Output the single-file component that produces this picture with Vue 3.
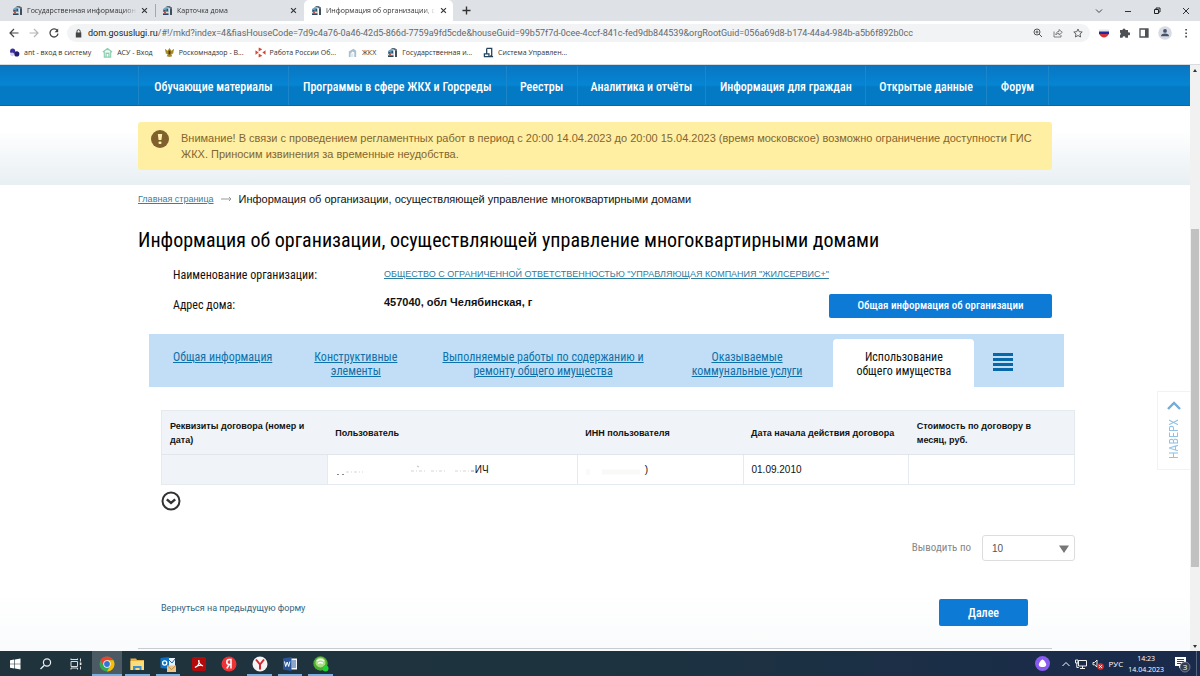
<script setup>
import { ref } from 'vue'

const tabs = [
  { title: 'Государственная информацион', active: false },
  { title: 'Карточка дома', active: false },
  { title: 'Информация об организации, с', active: true }
]
const url = ref('dom.gosuslugi.ru/#!/mkd?index=4&fiasHouseCode=7d9c4a76-0a46-42d5-866d-7759a9fd5cde&houseGuid=99b57f7d-0cee-4ccf-841c-fed9db844539&orgRootGuid=056a69d8-b174-44a4-984b-a5b6f892b0cc')
const host = 'dom.gosuslugi.ru'
const menu = ['Обучающие материалы', 'Программы в сфере ЖКХ и Горсреды', 'Реестры', 'Аналитика и отчёты', 'Информация для граждан', 'Открытые данные', 'Форум']
const perPage = ref('10')
</script>

<template>
  <div class="window">
    <svg class="defs" aria-hidden="true">
      <symbol id="city" viewBox="0 0 22 22">
        <path d="M9 2h6l5 3v15h-4V7l-3-2H9z" fill="#5d6d79" />
        <path d="M17 8h2v12h-2z" fill="#24323c" />
        <path d="M2 8l6-4 5 3v12H2z" fill="#6b9fbd" />
        <path d="M3 10h4v3H3zm6-2h3v4H9z" fill="#2d536c" />
        <path d="M1 14h13v3H1z" fill="#ddd" />
        <path d="M2 17h11v3H2z" fill="#2b465b" />
        <path d="M4 14h4v3H4z" fill="#c0504a" />
      </symbol>
      <symbol id="cross" viewBox="0 0 10 10">
        <path d="M1.500 1.500l7 7m0-7l-7 7" stroke="#333" stroke-width="1.600" fill="none" />
      </symbol>
    </svg>

    <header class="chrome">
      <div class="tabstrip">
        <div v-for="t in tabs" :key="t.title" class="tab" :class="{ active: t.active }">
          <svg class="fav"><use href="#city" /></svg>
          <span class="tab-title">{{ t.title }}</span>
          <button class="plain" aria-label="Закрыть вкладку"><svg class="x"><use href="#cross" /></svg></button>
        </div>
        <button class="plain new-tab" aria-label="Новая вкладка">
          <svg width="9" height="9" viewBox="0 0 9 9"><path d="M4.500 0.500v8M0.500 4.500h8" stroke="#333" stroke-width="1.400" /></svg>
        </button>
        <div class="win-controls">
          <button class="plain" aria-label="Поиск вкладок"><svg width="8" height="8" viewBox="0 0 8 8"><path d="M1 2.500l3 3 3-3" fill="none" stroke="#444" /></svg></button>
          <button class="plain" aria-label="Свернуть"><svg width="8" height="8" viewBox="0 0 8 8"><path d="M1 4.500h6" stroke="#333" /></svg></button>
          <button class="plain" aria-label="Восстановить"><svg width="8" height="8" viewBox="0 0 8 8"><path d="M1.500 2.500h4v4h-4zM3 2.500V1h4v4H5.500" fill="none" stroke="#222" /></svg></button>
          <button class="plain" aria-label="Закрыть"><svg width="8" height="8" viewBox="0 0 8 8"><path d="M1 1l6 6m0-6L1 7" stroke="#333" /></svg></button>
        </div>
      </div>

      <div class="toolbar">
        <div class="nav-buttons">
          <button class="plain" aria-label="Назад"><svg width="10" height="10" viewBox="0 0 10 10"><path d="M9.500 5H1m4-4L1 5l4 4" fill="none" stroke="#444" stroke-width="1.200" /></svg></button>
          <button class="plain" aria-label="Вперёд"><svg width="10" height="10" viewBox="0 0 10 10"><path d="M0.500 5H9M5 1l4 4-4 4" fill="none" stroke="#b4b6b9" stroke-width="1.200" /></svg></button>
          <button class="plain" aria-label="Обновить"><svg width="10" height="10" viewBox="0 0 10 10"><path d="M8.300 2.600A4 4 0 1 0 9 5.700" fill="none" stroke="#444" stroke-width="1.300" /><path d="M9.200 0.500v3.700H5.500z" fill="#444" /></svg></button>
        </div>
        <div class="omnibox">
          <svg width="7" height="9" viewBox="0 0 7 9"><path d="M0.800 3.500h5.500v5H0.800z" fill="#444" /><path d="M2 4V2.300a1.600 1.600 0 0 1 3.200 0V4" fill="none" stroke="#444" /></svg>
          <div class="address"><span class="host">{{ host }}</span>{{ url.slice(host.length) }}</div>
          <div class="omni-icons">
            <svg viewBox="0 0 10 10"><circle cx="4" cy="4" r="3" fill="none" stroke="#555" /><path d="M6.200 6.200L9 9M2.500 4h3M4 2.500v3" stroke="#555" /></svg>
            <svg viewBox="0 0 10 10"><path d="M1 3.500V9h7V7M2.800 7C3 4.500 4.500 3.400 6 3.400V1.500l3.300 2.800L6 7V5.300C4.500 5.300 3.500 6 2.800 7z" fill="none" stroke="#666" stroke-width="0.800" /></svg>
            <svg viewBox="0 0 10 10"><path d="M5 1l1.200 2.700 3 .3L7 6l.6 3L5 7.500 2.400 9 3 6 .8 4l3-.3z" fill="none" stroke="#555" stroke-width="0.900" /></svg>
          </div>
        </div>
        <div class="extensions">
          <svg viewBox="0 0 12 12"><path d="M1 2.500h10V5H1z" fill="#e3e5ea" /><path d="M1 4.500h10v2.600H1z" fill="#1d2ba0" /><path d="M1.200 7.100h9.600Q9 10.500 6 10.500T1.200 7.100z" fill="#cf3338" /></svg>
          <svg viewBox="0 0 12 12"><path d="M2 3h2.500a1.500 1.500 0 1 1 3 0H10v2.500a1.500 1.500 0 1 1 0 2.500v2.700H7.400a1.400 1.400 0 0 0-2.800 0H2V8a1.400 1.400 0 0 0 0-2.500z" fill="#4d5156" /></svg>
          <svg viewBox="0 0 12 12"><path d="M2 2h8v8H2z" fill="none" stroke="#4d5156" stroke-width="1.300" /><path d="M7 2h3v8H7z" fill="#4d5156" /></svg>
          <svg class="avatar" viewBox="0 0 14 14"><circle cx="7" cy="7" r="6.800" fill="#d8dbe4" /><circle cx="7" cy="4.900" r="1.900" fill="#46536b" /><path d="M3 10.300q0-2.800 4-2.800t4 2.800z" fill="#46536b" /></svg>
          <svg viewBox="0 0 12 12"><path d="M5.300 2h1.600v1.600H5.300zm0 3.400h1.600V7H5.300zm0 3.400h1.600v1.600H5.300z" fill="#444" /></svg>
        </div>
      </div>

      <nav class="bookmarks">
        <a href="#"><svg viewBox="0 0 12 12"><circle cx="4" cy="4.500" r="2.800" fill="#3a2f9b" /><circle cx="8.500" cy="7.500" r="2.800" fill="#241b75" /><circle cx="3.500" cy="8" r="2" fill="#cfcdf0" /></svg>ant - вход в систему</a>
        <a href="#"><svg viewBox="0 0 12 12"><path d="M1 5.500L6 1.500l5 4M2.500 5v6h7V5M4.500 11V7h3v4" fill="#dff5ea" stroke="#8bcdb0" stroke-width="1.200" /></svg>АСУ - Вход</a>
        <a href="#"><svg viewBox="0 0 12 12"><path d="M1 2l3 2 2-3 2 3 3-2-1 5-2 1 1 2-3 1-3-1 1-2-2-1z" fill="#a98a2b" /><path d="M5 4h2v4H5z" fill="#44381a" /></svg>Роскомнадзор - В...</a>
        <a href="#"><svg viewBox="0 0 12 12"><path d="M4 0.500l4 2-4 2.500zM0.500 3.500l3.500 2.500-3.500 2.500zM11.500 3.500v5L8 6zM4 7l4 2.500-4 2z" fill="#d14b38" /></svg>Работа России Об...</a>
        <a href="#"><svg viewBox="0 0 12 12"><path d="M2 5l5-3 3 2v7H8V6L6 5 4 7v4H2z" fill="#a7bfce" /><path d="M4 7h3v4H4z" fill="#dde9ef" /></svg>ЖКХ</a>
        <a href="#"><svg><use href="#city" /></svg>Государственная и...</a>
        <a href="#"><svg viewBox="0 0 12 12"><path d="M4 1.500h5.500v8H8M4 1.500V8M1 10.500h10M1.500 10.500V7.500h5v3" fill="none" stroke="#23435f" stroke-width="1.400" /></svg>Система Управлен...</a>
      </nav>
    </header>

    <div class="viewport">
      <main class="site">
        <nav class="menu">
          <div class="menu-inner wrap">
            <a v-for="m in menu" :key="m" href="#">{{ m }}</a>
          </div>
        </nav>

        <div class="notice-zone">
          <div class="notice wrap" role="alert">
            <svg width="18" height="18" viewBox="0 0 18 18"><circle cx="9" cy="9" r="9" fill="#80602c" /><path d="M6.800 4h4.400l-.8 6H7.600z" fill="#fff0ab" /><rect x="7.500" y="11.500" width="3" height="2.500" rx="1" fill="#fff0ab" /></svg>
            <p>Внимание! В связи с проведением регламентных работ в период с 20:00 14.04.2023 до 20:00 15.04.2023 (время московское) возможно ограничение доступности ГИС ЖКХ. Приносим извинения за временные неудобства.</p>
          </div>
        </div>

        <div class="content wrap">
          <div class="crumbs">
            <a href="#">Главная страница</a>
            <svg width="11" height="6" viewBox="0 0 11 6"><path d="M0 3h10M8 1l2 2-2 2" fill="none" stroke="#999" /></svg>
            <span>Информация об организации, осуществляющей управление многоквартирными домами</span>
          </div>

          <h1>Информация об организации, осуществляющей управление многоквартирными домами</h1>

          <dl class="facts">
            <dt>Наименование организации:</dt>
            <dd><a href="#">ОБЩЕСТВО С ОГРАНИЧЕННОЙ ОТВЕТСТВЕННОСТЬЮ "УПРАВЛЯЮЩАЯ КОМПАНИЯ "ЖИЛСЕРВИС+"</a></dd>
            <dt>Адрес дома:</dt>
            <dd class="addr"><b>457040, обл Челябинская, г</b><button class="primary small">Общая информация об организации</button></dd>
          </dl>

          <nav class="sections">
            <a href="#">Общая информация</a>
            <a href="#">Конструктивные<br>элементы</a>
            <a href="#" class="roomy">Выполняемые работы по содержанию и<br>ремонту общего имущества</a>
            <a href="#" class="roomy">Оказываемые<br>коммунальные услуги</a>
            <a href="#" class="current">Использование<br>общего имущества</a>
            <button class="plain list" aria-label="Все разделы"><svg width="20" height="18" viewBox="0 0 20 18"><path d="M0 1.500h20M0 6.500h20M0 11.500h20M0 16.500h20" stroke="#0668a9" stroke-width="3" /></svg></button>
          </nav>

          <section class="data">
            <table>
              <thead>
                <tr>
                  <th>Реквизиты договора (номер и дата)</th>
                  <th class="wide">Пользователь</th>
                  <th>ИНН пользователя</th>
                  <th>Дата начала действия договора</th>
                  <th class="cost">Стоимость по договору в месяц, руб.</th>
                </tr>
              </thead>
              <tbody>
                <tr>
                  <td class="shade"></td>
                  <td><svg class="smudge" width="139" height="12" viewBox="0 0 139 12"><path d="M1 10.500h2m3 0h2" stroke="#888" /><path d="M10 8h17M75 7h14m6 0h16m8 0h20" stroke="#999" stroke-width="2" stroke-dasharray="3 2 1 2" opacity=".2" /><path d="M81 2l2 1m52 4h3" stroke="#777" opacity=".5" /></svg>ИЧ</td>
                  <td><svg class="smudge" width="59" height="12" viewBox="0 0 59 12"><path d="M0 8h4m12 0h38" stroke="#bba" stroke-width="5" opacity=".08" /></svg>)</td>
                  <td>01.09.2010</td>
                  <td></td>
                </tr>
              </tbody>
            </table>
            <button class="plain expand" aria-label="Развернуть"><svg width="20" height="20" viewBox="0 0 20 20"><circle cx="10" cy="10" r="8.500" fill="none" stroke="#333" stroke-width="2" /><path d="M5.800 8.300L10 12l4.200-3.700" fill="none" stroke="#333" stroke-width="2.400" /></svg></button>

            <div class="pager">
              <label for="per-page">Выводить по</label>
              <div class="select">
                <select id="per-page" v-model="perPage"><option>10</option><option>20</option><option>50</option></select>
                <svg width="10" height="8" viewBox="0 0 10 8"><path d="M0 0.500h10L5 8z" fill="#777" /></svg>
              </div>
            </div>

            <div class="actions">
              <a href="#">Вернуться на предыдущую форму</a>
              <button class="primary next">Далее</button>
            </div>
          </section>
          <hr>
        </div>

        <button class="to-top">
          <svg width="14" height="9" viewBox="0 0 14 9"><path d="M1 8l6-6 6 6" fill="none" stroke="#74acd8" stroke-width="2.400" /></svg>
          <span>НАВЕРХ</span>
        </button>
      </main>

      <aside class="scrollbar">
        <svg width="6" height="10" viewBox="0 0 6 10"><path d="M1 7l2-3 2 3z" fill="#333" /></svg>
        <i class="before"></i><i class="thumb"></i><i class="after"></i>
        <svg width="6" height="10" viewBox="0 0 6 10"><path d="M1 4l2 3 2-3z" fill="#333" /></svg>
      </aside>
    </div>

    <footer class="taskbar">
      <div class="apps">
        <button class="plain" aria-label="Пуск"><svg viewBox="0 0 16 16"><path d="M3 4.200l4.400-.7v4.200H3zM8 3.400l5.500-.8v5.100H8zM3 8.300h4.400v4.200L3 11.800zM8 8.300h5.500v5.100L8 12.600z" fill="#fff" /></svg></button>
        <button class="plain" aria-label="Поиск"><svg viewBox="0 0 16 16"><circle cx="9" cy="6.500" r="3.600" fill="none" stroke="#eee" stroke-width="1.200" /><path d="M6.400 9.200L2.500 13" stroke="#eee" stroke-width="1.300" /></svg></button>
        <button class="plain" aria-label="Представление задач"><svg viewBox="0 0 16 16"><path d="M3 5.500h6.500v5H3zM3 4V2.500M9.500 4V2.500M3 3.500h6.500M3 13.500V12h6.500v1.500M12.500 2.500v3m0 5v3" fill="none" stroke="#ddd" /><path d="M11.800 6.500h1.600v2.500h-1.600z" fill="#eee" /></svg></button>
        <button class="plain run focus" aria-label="Chrome"><svg viewBox="0 0 16 16"><circle cx="8" cy="8" r="7.500" fill="#34a853" /><path d="M1.500 4.300A7.500 7.500 0 0 1 14.500 4.300H8L4.700 10z" fill="#ea4335" /><path d="M14.500 4.300A7.500 7.500 0 0 1 8 15.500L11.300 9.500 8 4.300z" fill="#fbbc05" /><circle cx="8" cy="8" r="3.700" fill="#fff" /><circle cx="8" cy="8" r="2.900" fill="#2f74e0" /></svg></button>
        <button class="plain run" aria-label="Проводник"><svg viewBox="0 0 16 16"><path d="M1.500 2.500H7l1 1.500h7v10H1.500z" fill="#e8b13c" /><path d="M1.500 5h13.500v9H1.500z" fill="#fbdc7c" /><path d="M4 14v-4h8.500v4h-2v-2h-4v2z" fill="#3f8ed0" /></svg></button>
        <button class="plain run" aria-label="Outlook"><svg viewBox="0 0 16 16"><path d="M8 2h7v8H8z" fill="#e9f2fa" /><path d="M9 4l3 3 3-4" stroke="#0b6cc0" fill="none" /><path d="M0.500 2L9 1v12l-8.500-1z" fill="#0872c6" /><circle cx="4.700" cy="7" r="2.100" fill="none" stroke="#fff" stroke-width="1.300" /><path d="M7 9.500h9V16H7z" fill="#efc587" /><path d="M7 9.500l4.500 4 4.500-4" fill="none" stroke="#b27d3c" stroke-width="0.800" /></svg></button>
        <button class="plain" aria-label="Acrobat"><svg viewBox="0 0 16 16"><rect x="1" y="1" width="14" height="14" rx="2" fill="#b30b0b" /><path d="M4 11.500C7 10 8.500 7 8 4.500 7.300 4 7 8 12 10 10 8.500 6 9.500 4 11.500z" fill="none" stroke="#fff" stroke-width="1.100" /></svg></button>
        <button class="plain" aria-label="Яндекс"><svg viewBox="0 0 16 16"><circle cx="8" cy="8" r="7.500" fill="#ee3337" /><path d="M10 12.500v-9H8.300a2.300 2.300 0 0 0 0 5H10M8.300 8.500L5.700 12.500" fill="none" stroke="#fff" stroke-width="1.500" /></svg></button>
        <button class="plain run" aria-label="Яндекс Браузер"><svg viewBox="0 0 16 16"><circle cx="8" cy="8" r="7.500" fill="#f4f4f4" /><path d="M4 3.500L8 8.500v5M12 3.500L8 8.500" fill="none" stroke="#d7262d" stroke-width="2" /></svg></button>
        <button class="plain run" aria-label="Word"><svg viewBox="0 0 16 16"><path d="M8 2.500h7v11H8z" fill="#f2f5fa" /><path d="M9.500 5H14M9.500 7H14M9.500 9H14M9.500 11H14" stroke="#2a5699" /><path d="M1 2.500L9.500 1v14L1 13.500z" fill="#2a5699" /><path d="M2.500 5.500l1.200 5 1.500-4.500 1.500 4.500 1.200-5" fill="none" stroke="#fff" /></svg></button>
        <button class="plain run" aria-label="Мессенджер"><svg viewBox="0 0 16 16"><circle cx="7.500" cy="7.500" r="7.200" fill="#4dab2e" /><circle cx="7.500" cy="6.500" r="5" fill="#a9de84" /><path d="M4 5q3.500-3 7 0M5 7.500q2.500-2 5 0" fill="none" stroke="#fff" stroke-width="1.300" /><circle cx="12.500" cy="12.500" r="3" fill="#22d132" /></svg></button>
      </div>
      <div class="tray">
        <svg class="alice" viewBox="0 0 16 16"><circle cx="8" cy="8" r="8" fill="#8a5bf0" /><path d="M8 3.800c1.600 0 4 4.200 4 5.600 0 1.800-1.800 2.400-4 2.400s-4-.6-4-2.400C4 8 6.400 3.800 8 3.800z" fill="#fff" /></svg>
        <svg width="8" height="8" viewBox="0 0 8 8"><path d="M0.500 6L4 2.500 7.500 6" fill="none" stroke="#fff" /></svg>
        <svg width="12" height="12" viewBox="0 0 12 12"><path d="M3.500 2.500h8v5.500h-8zM5 10.500h5M7.500 8v2.500M0.500 2h2.500v3H0.500zM1.800 5v4.500h2" fill="none" stroke="#eee" /></svg>
        <svg width="12" height="12" viewBox="0 0 12 12"><path d="M1 4.500h1.500L5 2v7L2.500 6.800H1z" fill="none" stroke="#eee" /><circle cx="8.500" cy="8.500" r="3.300" fill="#c9373c" /><path d="M7.200 7.200l2.600 2.600m0-2.600L7.200 9.800" stroke="#fff" /></svg>
        <span>РУС</span>
        <time>14:23<br>14.04.2023</time>
        <svg class="alerts" width="18" height="18" viewBox="0 0 18 18"><path d="M2 2h11v9H8l-2 2.500V11H2z" fill="#fff" /><path d="M4 4.500h7M4 6.500h7M4 8.500h4" stroke="#33405c" /><circle cx="12" cy="12" r="5" fill="#343e50" stroke="#8c96a6" stroke-width="0.700" /><text x="12" y="15" text-anchor="middle">3</text></svg>
      </div>
    </footer>
  </div>
</template>

<style>
body { margin: 0; background: #fff; }
</style>

<style scoped>
* { box-sizing: border-box; }
.window { min-height: 100vh; display: flex; flex-direction: column; font-family: "Liberation Sans", Arial, sans-serif; color: #111; }
.defs { position: absolute; width: 0; height: 0; }
a { color: inherit; text-decoration: none; }
svg { display: block; flex: none; }
button { font: inherit; cursor: pointer; }
.plain { border: 0; padding: 0; background: none; display: flex; align-items: center; justify-content: center; }

.chrome { font: 7px/12px "Open Sans", "Noto Sans", sans-serif; color: #333; border-bottom: 1px solid #d9dcdf; }
.tabstrip { height: 21px; background: #dee1e6; display: flex; align-items: center; }
.tab { width: 142px; height: 21px; padding: 0 1px 0 6px; display: flex; align-items: center; gap: 4px; }
.tab:first-child { width: 156px; height: 13px; padding: 0 7px 0 12px; border-right: 1px solid #a4a7ab; }
.tab.active { width: 149px; background: #fff; border-radius: 5px 5px 0 0; padding: 0 6px 0 7px; margin-left: 6px; }
.fav { width: 11px; height: 11px; }
.tab-title { flex: 1; white-space: nowrap; mask-image: linear-gradient(90deg, #000 88%, transparent); }
.x { width: 7px; height: 7px; }
.new-tab { width: 27px; height: 21px; }
.win-controls { margin-left: auto; display: flex; }
.win-controls button { width: 29px; height: 18px; }
.toolbar { display: flex; align-items: center; height: 24px; background: #fff; }
.nav-buttons { display: flex; gap: 10px; padding: 0 9px; width: 67px; }
.omnibox { flex: 1; min-width: 0; height: 18px; border-radius: 9px; background: #f1f3f4; display: flex; align-items: center; gap: 6px; padding: 0 7px 0 8px; }
.address { flex: 1; min-width: 0; font: 9px/16px Roboto, "Noto Sans", sans-serif; color: #64686c; white-space: nowrap; overflow: hidden; }
.host { color: #222; }
.omni-icons { display: flex; gap: 10px; }
.omni-icons svg { width: 10px; height: 10px; }
.extensions { display: flex; align-items: center; gap: 8px; padding: 0 8px; }
.extensions svg { width: 12px; height: 12px; }
.extensions .avatar { width: 14px; height: 14px; }
.bookmarks { height: 19px; display: flex; align-items: center; gap: 11px; padding: 0 9px 4px; }
.bookmarks a { display: flex; align-items: center; gap: 4px; white-space: nowrap; }
.bookmarks svg { width: 11px; height: 11px; }

.viewport { flex: 1; display: flex; }
.site { flex: 1; min-width: 0; position: relative; background: linear-gradient(#fff 90%, #f9fbfc); }
.wrap { max-width: 914px; margin-left: auto; margin-right: auto; }
.menu { background: linear-gradient(#0a76c2, #0585d3 48%, #047ac4 54%, #0479c4); border-top: 1px solid #1a6ea5; border-bottom: 1px solid #0b69a6; }
.menu-inner { display: grid; grid-template-columns: 150fr 218fr 71fr 129fr 160fr 121fr 62fr 3fr; border-left: 1px solid #1c86cb; }
.menu-inner a { color: #fff; text-align: center; font: 500 12px/36px "Roboto Condensed", "Liberation Sans Narrow", "Liberation Sans", sans-serif; padding-top: 3px; white-space: nowrap; border-right: 1px solid #1c86cb; }
.notice-zone { padding: 16px 0 15px; background: linear-gradient(#fff 30%, #e8eff3); }
.notice { background: #ffefa3; border-radius: 3px; padding: 8px 0 8px 13px; display: flex; align-items: flex-start; gap: 12px; color: #83652f; }
.notice p { margin: 0; font-size: 11px; line-height: 16px; }

.crumbs { display: flex; align-items: center; gap: 7px; padding-top: 6px; font-size: 11px; line-height: 16px; }
.crumbs a { font-size: 9px; color: #3b7ea1; text-decoration: underline; }
h1 { margin: 20px 0 0; font: 400 20px/26px "Roboto Condensed", "Liberation Sans Narrow", "Liberation Sans", sans-serif; color: #000; }
.facts { margin: 10px 0 0; padding-left: 35px; display: grid; grid-template-columns: 211px 1fr; row-gap: 6px; }
.facts dt { font: 12px/24px "Roboto Condensed", "Liberation Sans Narrow", "Liberation Sans", sans-serif; }
.facts dd { margin: 0; font-size: 9px; line-height: 22px; }
.facts dd a { color: #2e7d9e; text-decoration: underline; }
.facts .addr { display: flex; justify-content: space-between; align-items: flex-start; font-size: 11px; line-height: 18px; }
.primary { border: 0; border-radius: 2px; background: #0d7bd6; color: #fff; font-family: "Roboto Condensed", "Liberation Sans Narrow", "Liberation Sans", sans-serif; font-weight: 500; }
.small { width: 223px; height: 24px; margin-top: 1px; font-size: 11px; }

.sections { margin: 16px -12px 0 11px; background: #c1def6; display: flex; height: 53px; padding: 5px 0 0 3px; font: 12px/14px "Roboto Condensed", "Liberation Sans Narrow", "Liberation Sans", sans-serif; color: #0f71a9; }
.sections a { padding: 11px 21px 0; text-align: center; text-decoration: underline; white-space: nowrap; }
.sections .roomy { padding: 11px 24px 0; }
.sections .current { margin-left: 7px; padding: 11px 23px 0; background: #fff; color: #111; text-decoration: none; border-radius: 4px 4px 0 0; }
.list { padding: 0 19px; height: 46px; }

.data { margin: 23px -23px 0 23px; }
table { width: 100%; table-layout: fixed; border-collapse: collapse; border: 1px solid #e4eaef; font-size: 10px; }
th { background: #f0f4f8; text-align: left; padding: 8px 6px 7px 8px; font-size: 9px; line-height: 14px; height: 43px; color: #111; border-bottom: 1px solid #e0e6ec; }
th.wide { width: 250px; }
th.cost { padding-right: 30px; }
td { padding: 0 8px; height: 30px; border-right: 1px solid #e4eaef; line-height: 14px; }
.shade { background: #f0f4f8; }
.smudge { display: inline-block; vertical-align: middle; }
.expand { margin-top: 6px; }
.pager { display: flex; justify-content: flex-end; align-items: center; gap: 11px; margin-top: 24px; color: #888; font: 11px/16px "Roboto Condensed", "Liberation Sans Narrow", "Liberation Sans", sans-serif; }
.select { position: relative; width: 93px; }
.select select { width: 100%; height: 26px; border: 1px solid #ddd; border-radius: 3px; background: #fff; appearance: none; padding: 0 9px; font: 10px "Liberation Sans", Arial, sans-serif; color: #555; }
.select svg { position: absolute; right: 6px; top: 10px; pointer-events: none; }
.actions { display: flex; justify-content: space-between; align-items: flex-start; margin-top: 38px; padding-right: 47px; }
.actions a { font: 9px/18px Roboto, sans-serif; color: #34667f; }
.next { width: 89px; height: 27px; font-size: 12px; }
hr { border: 0; border-top: 1px solid #c8ccd0; margin: 22px 0 1px; }
.to-top { position: absolute; right: 0; top: 326px; width: 33px; height: 79px; background: #fff; border: 1px solid #f0f2f4; border-right: 0; padding: 9px 0 0; display: flex; flex-direction: column; align-items: center; gap: 9px; color: #92c2e6; }
.to-top span { writing-mode: vertical-rl; transform: rotate(180deg); font: 12px/14px "Roboto Condensed", "Liberation Sans Narrow", "Liberation Sans", sans-serif; }
.scrollbar { width: 10px; background: #f1f1f1; display: flex; flex-direction: column; align-items: center; }
.thumb { width: 8px; background: #c1c1c1; flex: 338; }
.before { flex: 154; }
.after { flex: 74; }

.taskbar { height: 25px; display: flex; justify-content: space-between; background: linear-gradient(90deg, #20333d, #1d333f 50%, #192a4c); color: #fff; font: 8px/11px "Open Sans", "Noto Sans", sans-serif; }
.apps { display: grid; grid-template-columns: repeat(11, 1fr); width: 336px; }
.apps svg { width: 16px; height: 16px; }
.apps .run { border-bottom: 2px solid #76b0e0; margin: 0 3px; padding-top: 2px; }
.apps .focus { background: #4b5a63; margin: 0; }
.tray { display: flex; align-items: center; gap: 5px; padding-right: 5px; margin-right: 3px; border-right: 1px solid #56627a; }
.tray .alice { width: 15px; height: 15px; margin-right: 7px; }
.tray time { text-align: center; font-size: 7px; }
.alerts { margin-left: 4px; }
.alerts text { font-size: 8px; fill: #fff; }
</style>
